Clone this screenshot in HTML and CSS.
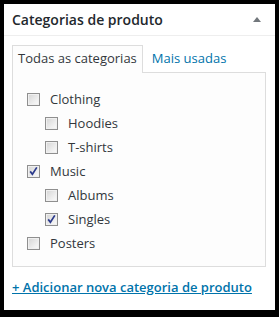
FILE: index.html
```html
<!DOCTYPE html>
<html>
<head>
<meta charset="utf-8">
<link rel="stylesheet" href="styles.css">
</head>
<body>
<div class="postbox">
  <div class="hndle">
    <span class="title">Categorias de produto</span>
    <span class="toggle"></span>
  </div>
  <div class="inside">
    <ul class="tabs">
      <li class="tab active">Todas as categorias</li>
      <li class="tab other">Mais usadas</li>
    </ul>
    <div class="tabs-panel">
      <ul class="cats">
        <li class="row"><span class="cb"></span>Clothing</li>
        <li class="row child"><span class="cb"></span>Hoodies</li>
        <li class="row child"><span class="cb"></span>T-shirts</li>
        <li class="row"><span class="cb on"><svg viewBox="0 0 11 11" width="11" height="11"><path d="M2.2 5.4 L4.4 8.2 L8.8 1.4" fill="none" stroke="#2b3a8c" stroke-width="1.7"/></svg></span>Music</li>
        <li class="row child"><span class="cb"></span>Albums</li>
        <li class="row child"><span class="cb on"><svg viewBox="0 0 11 11" width="11" height="11"><path d="M2.2 5.4 L4.4 8.2 L8.8 1.4" fill="none" stroke="#2b3a8c" stroke-width="1.7"/></svg></span>Singles</li>
        <li class="row"><span class="cb"></span>Posters</li>
      </ul>
    </div>
    <a class="add" href="#">+ Adicionar nova categoria de produto</a>
  </div>
</div>
</body>
</html>
```

FILE: styles.css
```css
html, body {
  margin: 0;
  padding: 0;
  background: #000;
}
body {
  width: 279px;
  height: 317px;
  overflow: hidden;
  font-family: "Open Sans", "Liberation Sans", sans-serif;
}
.postbox {
  margin: 4px 4px 0 4px;
  height: 306px;
  background: #fff;
}
.hndle {
  height: 31px;
  border-bottom: 1px solid #eee;
  display: flex;
  align-items: center;
  justify-content: space-between;
  padding: 0 8px;
}
.title {
  font-size: 14px;
  font-weight: 600;
  color: #23282d;
}
.toggle {
  width: 0;
  height: 0;
  border-left: 4px solid transparent;
  border-right: 4px solid transparent;
  border-bottom: 5px solid #72777c;
  margin-right: 6px;
}
.inside {
  padding: 9px 9px 0 8px;
}
ul {
  list-style: none;
  margin: 0;
  padding: 0;
}
.tabs {
  display: flex;
  font-size: 13px;
  margin-bottom: -1px;
  position: relative;
  z-index: 1;
}
.tab {
  padding: 3px 5px 5px 5px;
  line-height: 18px;
  color: #0073aa;
  border: 1px solid transparent;
  border-bottom: none;
}
.tab.other {
  padding-left: 8px;
}
.tab.active {
  color: #32373c;
  border-color: #ddd;
  background: #fdfdfd;
  padding-bottom: 6px;
}
.tabs-panel {
  height: 195px;
  border: 1px solid #ddd;
  background: #fdfdfd;
  box-sizing: border-box;
  padding: 14px 0 0 14px;
}
.row {
  height: 24px;
  display: flex;
  align-items: center;
  font-size: 13px;
  color: #32373c;
}
.row.child {
  padding-left: 18px;
}
.cb {
  width: 13px;
  height: 13px;
  box-sizing: border-box;
  border: 1px solid #8f8f8f;
  background: linear-gradient(135deg, #d4d4d4 0%, #efefef 65%, #fbfbfb 100%);
  box-shadow: inset 0 0 0 1px #f0f0f0;
  margin-right: 10px;
  display: flex;
  align-items: center;
  justify-content: center;
}
.cb svg {
  display: block;
}
.add {
  display: inline-block;
  margin-top: 11px;
  font-size: 13px;
  font-weight: 600;
  color: #0073aa;
  text-decoration: underline;
}
```
